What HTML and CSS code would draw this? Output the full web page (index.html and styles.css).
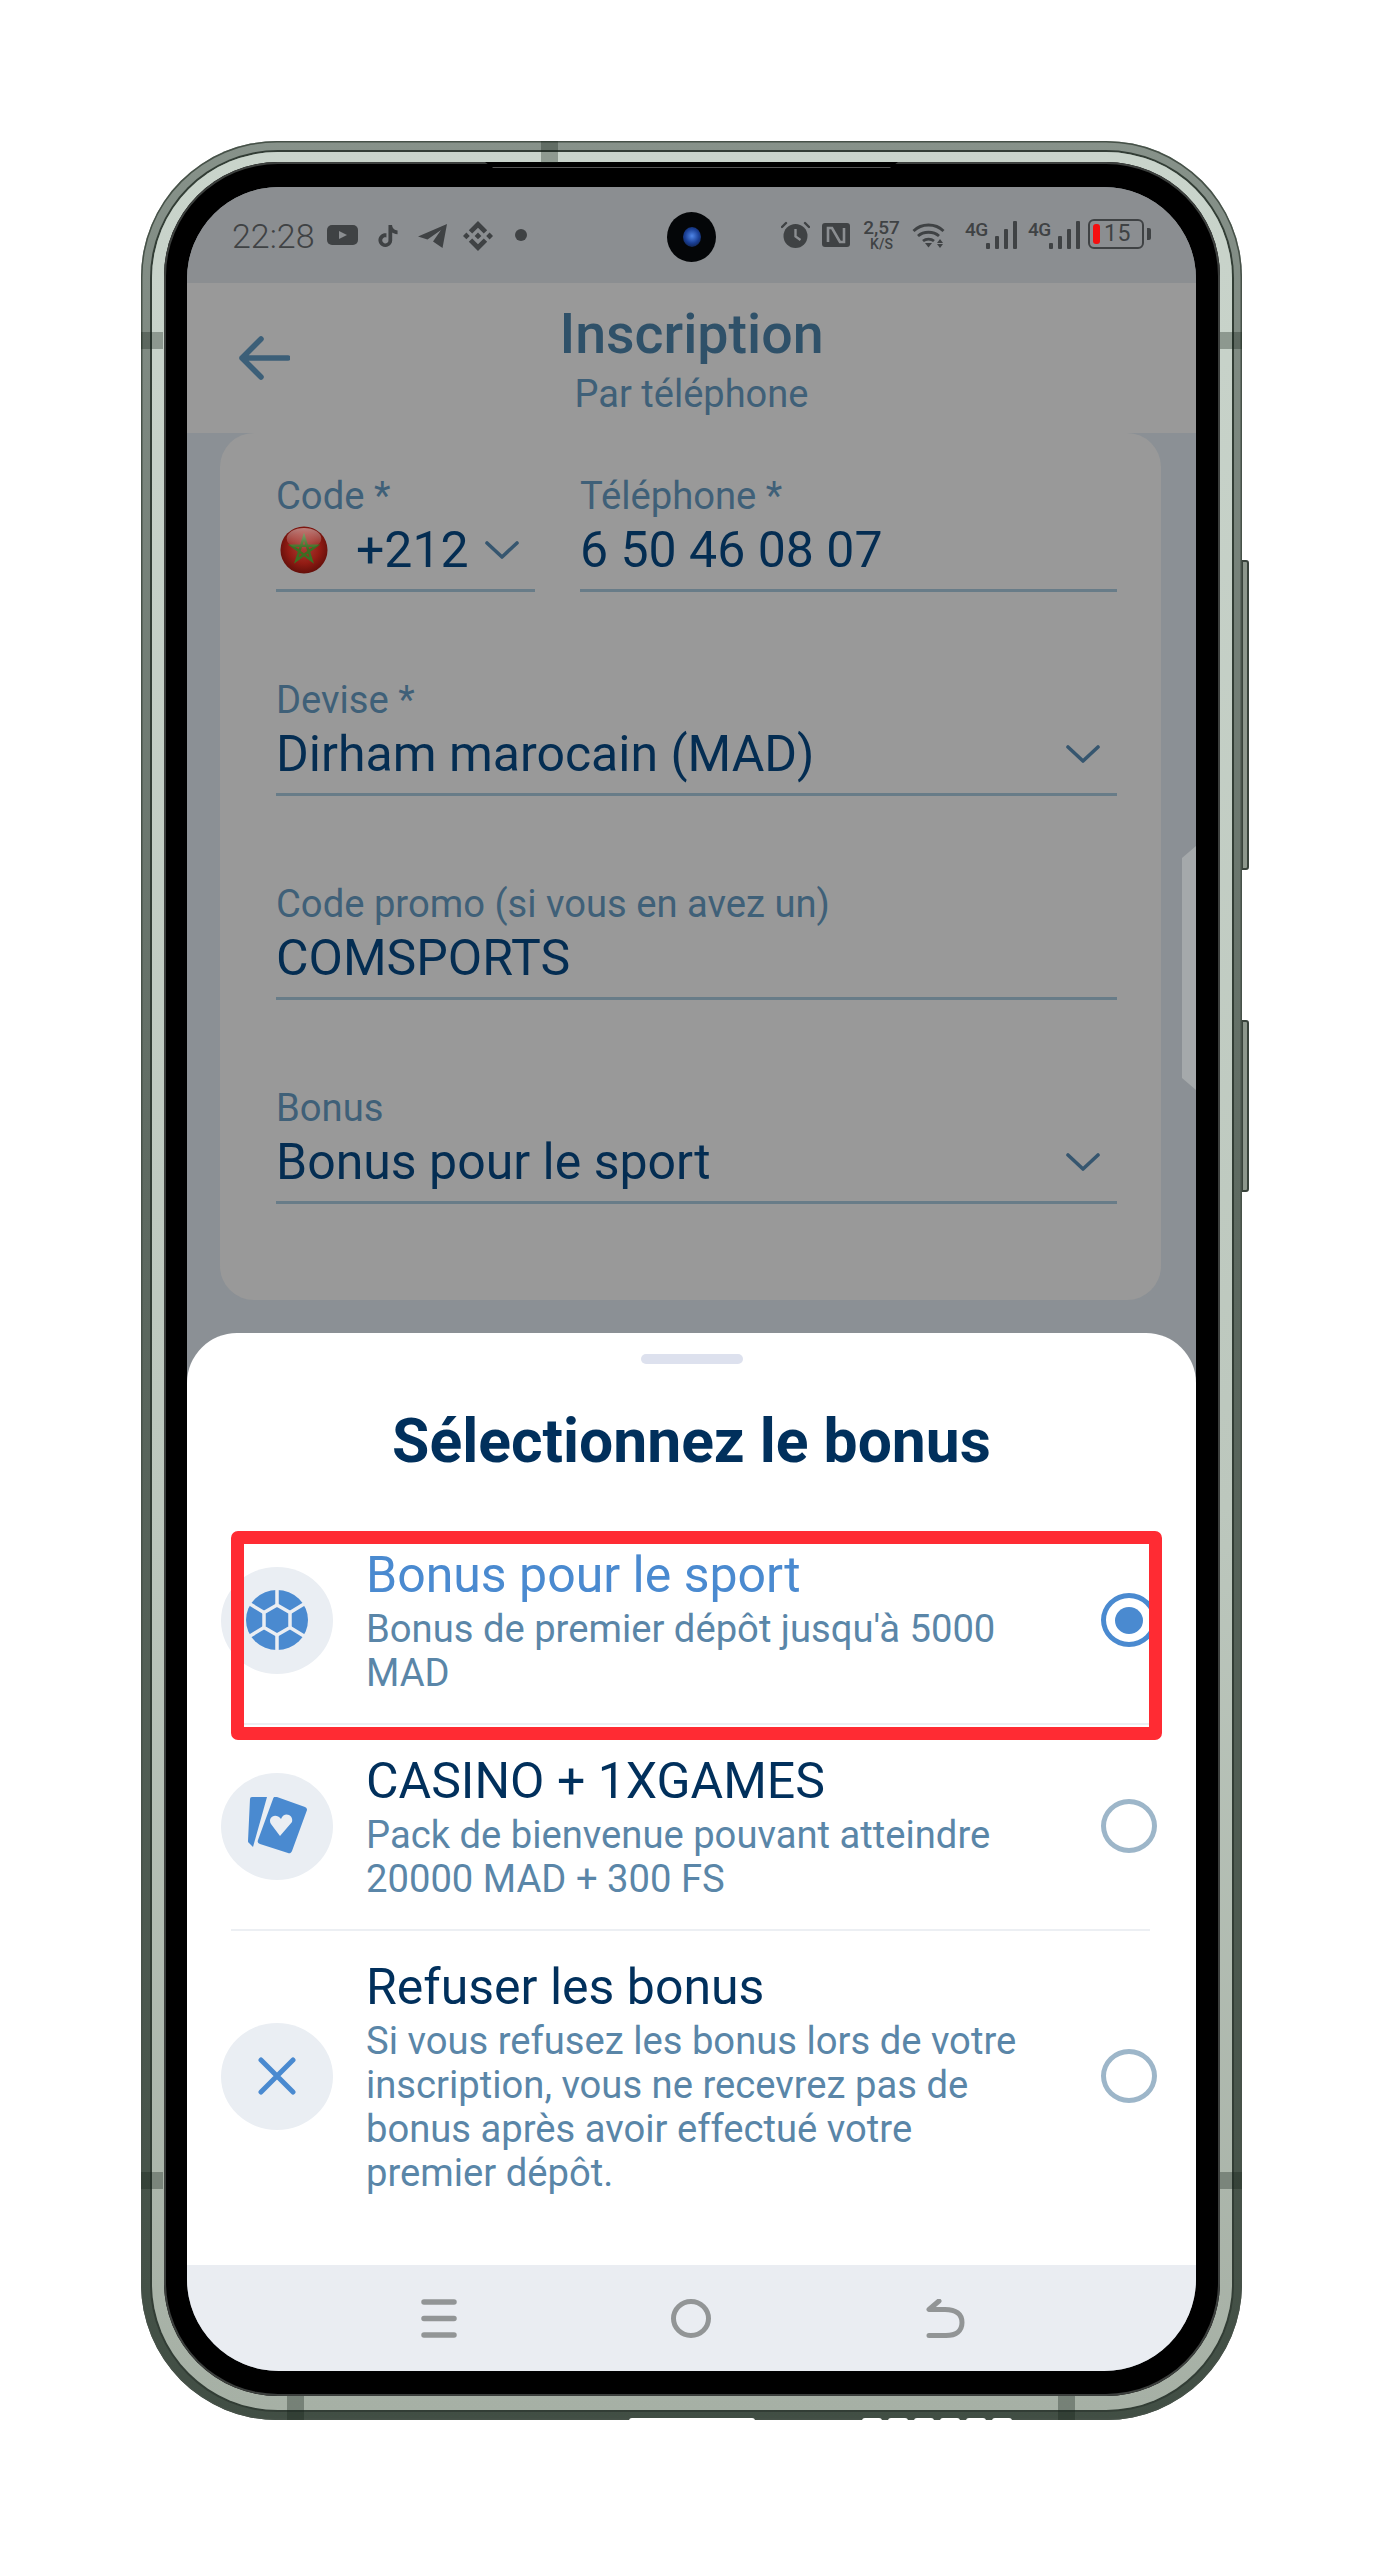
FILE: index.html
```html
<!DOCTYPE html>
<html lang="fr">
<head>
<meta charset="utf-8">
<title>Inscription</title>
<link rel="stylesheet" href="styles.css">
</head>
<body>
<div class="stage">
  <div class="phone">
    <span class="side-btn side-btn-a"></span>
    <span class="side-btn side-btn-b"></span>
    <span class="band band-top"></span>
    <span class="band band-l1"></span>
    <span class="band band-r1"></span>
    <span class="band band-l2"></span>
    <span class="band band-r2"></span>
    <span class="band band-b1"></span>
    <span class="band band-b2"></span>
    <span class="port"></span>
    <span class="speaker"><i></i><i></i><i></i><i></i><i></i><i></i></span>
    <div class="ring">
      <div class="bezel">
        <span class="earpiece"></span>
        <div class="screen">
          <div class="status">
            <div class="status-left">
              <span class="time">22:28</span>
              <svg class="ic ic-yt" viewBox="0 0 31 20"><rect width="31" height="20" rx="5" fill="#3f4244"/><path d="M12 6l8 4-8 4z" fill="#8b8e91"/></svg>
              <svg class="ic ic-tt" viewBox="0 0 24 24"><path fill="#3f4244" d="M12.525.02c1.31-.02 2.61-.01 3.91-.02.08 1.53.63 3.09 1.75 4.17 1.12 1.11 2.7 1.62 4.24 1.79v4.03c-1.44-.05-2.89-.35-4.2-.97-.57-.26-1.1-.59-1.62-.93-.01 2.92.01 5.84-.02 8.75-.08 1.4-.54 2.79-1.35 3.94-1.31 1.92-3.58 3.17-5.91 3.21-1.43.08-2.86-.31-4.08-1.03-2.02-1.19-3.44-3.37-3.65-5.71-.02-.5-.03-1-.01-1.49.18-1.9 1.12-3.72 2.58-4.96 1.66-1.44 3.98-2.13 6.15-1.72.02 1.48-.04 2.96-.04 4.44-.99-.32-2.15-.23-3.02.37-.63.41-1.11 1.04-1.36 1.75-.21.51-.15 1.07-.14 1.61.24 1.64 1.82 3.02 3.5 2.87 1.12-.01 2.19-.66 2.77-1.61.19-.33.4-.67.41-1.06.1-1.79.06-3.57.07-5.36.01-4.03-.01-8.05.02-12.07z"/></svg>
              <svg class="ic ic-tg" viewBox="0 0 29 24"><path fill="#3f4244" d="M0 12.5 29 0 24.5 24 15 17.5 23 6 9.5 15.5z"/></svg>
              <svg class="ic ic-bn" viewBox="0 0 24 24"><path fill="#3f4244" d="M16.624 13.9202l2.7175 2.7154-7.353 7.353-7.353-7.352 2.7175-2.7164 4.6355 4.6595 4.6356-4.6595zm4.6366-4.6366L24 12l-2.7154 2.7164L18.5682 12l2.6924-2.7164zm-9.272.001l2.7163 2.6914-2.7164 2.7174v-.001L9.2721 12l2.7164-2.7154zm-9.2722-.001L5.4088 12l-2.6914 2.6924L0 12l2.7164-2.7164zM11.9885.0115l7.353 7.329-2.7174 2.7154-4.6356-4.6356-4.6355 4.6595-2.7174-2.7154 7.353-7.353z"/></svg>
              <span class="dot"></span>
            </div>
            <div class="camera"><span class="lens"></span></div>
            <div class="status-right">
              <svg class="ic ic-alarm" viewBox="0 0 29 27"><circle cx="14.5" cy="15" r="12" fill="#3f4244"/><path d="M14.5 8v7.5l5 3.5" fill="none" stroke="#8b8e91" stroke-width="2.4"/><path d="M1 6l4-4M28 6l-4-4" stroke="#3f4244" stroke-width="2.4" stroke-linecap="round"/></svg>
              <svg class="ic ic-nfc" viewBox="0 0 28 24"><rect width="28" height="24" rx="3" fill="#3f4244"/><path d="M6 19V5h4l8 14h4V5" fill="none" stroke="#8b8e91" stroke-width="2.6"/></svg>
              <span class="speed"><b>2,57</b><b class="speed-unit">K/S</b></span>
              <svg class="ic ic-wifi" viewBox="0 0 33 26"><path d="M1.5 9C9.5 1 23.5 1 31.5 9M6 14c5.500-5 15.500-5 21 0M11 19c3-2.500 8-2.500 11 0" fill="none" stroke="#3f4244" stroke-width="2.800"/><path d="M13 21h7l-3.500 4.500z" fill="#3f4244"/><path d="M28 17l3 4h-6zM28 26l3-4h-6z" fill="#3f4244"/></svg>
              <span class="net"><span class="net-label">4G</span><span class="bars"><i class="b1"></i><i class="b2"></i><i class="b3"></i><i class="b4"></i></span></span>
              <span class="net"><span class="net-label">4G</span><span class="bars"><i class="b1"></i><i class="b2"></i><i class="b3"></i><i class="b4"></i></span></span>
              <span class="battery"><span class="battery-body"><i class="battery-fill"></i><span class="battery-num">15</span></span><i class="battery-tip"></i></span>
            </div>
          </div>
          <header class="topbar">
            <svg class="back" viewBox="0 0 52 44"><path d="M23 3 4 22l19 19M4 22h46" fill="none" stroke="#3c5f78" stroke-width="5.500" stroke-linecap="round" stroke-linejoin="round"/></svg>
            <h1 class="topbar-title">Inscription</h1>
            <p class="topbar-sub">Par téléphone</p>
          </header>
          <main class="content">
            <span class="edge-handle"></span>
            <section class="card">
              <div class="field-pair">
                <div class="field field-code">
                  <span class="label">Code *</span>
                  <div class="value-row">
                    <svg class="flag" viewBox="0 0 50 50">
                      <defs>
                        <radialGradient id="flagRed" cx="50%" cy="45%" r="55%"><stop offset="0" stop-color="#a83f36"/><stop offset=".6" stop-color="#931c14"/><stop offset="1" stop-color="#640f0a"/></radialGradient>
                        <linearGradient id="flagShine" x1="0" y1="0" x2="0" y2="1"><stop offset="0" stop-color="#fff" stop-opacity=".45"/><stop offset="1" stop-color="#fff" stop-opacity="0"/></linearGradient>
                      </defs>
                      <circle cx="25" cy="25" r="24.500" fill="url(#flagRed)"/>
                      <path d="M25 11 33 36 12 20.500H38L17 36z" fill="none" stroke="#3c6e22" stroke-width="2.600"/>
                      <ellipse cx="25" cy="13" rx="18" ry="11" fill="url(#flagShine)"/>
                    </svg>
                    <span class="value value-code">+212</span>
                    <svg class="chev chev-code" viewBox="0 0 34 18"><path d="M2 2l15 14L32 2" fill="none" stroke="#36566f" stroke-width="3.600" stroke-linecap="round" stroke-linejoin="round"/></svg>
                  </div>
                </div>
                <div class="field field-tel">
                  <span class="label">Téléphone *</span>
                  <div class="value-row"><span class="value">6 50 46 08 07</span></div>
                </div>
              </div>
              <div class="field">
                <span class="label">Devise *</span>
                <div class="value-row"><span class="value">Dirham marocain (MAD)</span><svg class="chev" viewBox="0 0 34 18"><path d="M2 2l15 14L32 2" fill="none" stroke="#36566f" stroke-width="3.600" stroke-linecap="round" stroke-linejoin="round"/></svg></div>
              </div>
              <div class="field">
                <span class="label">Code promo (si vous en avez un)</span>
                <div class="value-row"><span class="value">COMSPORTS</span></div>
              </div>
              <div class="field">
                <span class="label">Bonus</span>
                <div class="value-row"><span class="value">Bonus pour le sport</span><svg class="chev" viewBox="0 0 34 18"><path d="M2 2l15 14L32 2" fill="none" stroke="#36566f" stroke-width="3.600" stroke-linecap="round" stroke-linejoin="round"/></svg></div>
              </div>
            </section>
          </main>
          <section class="sheet">
            <span class="grabber"></span>
            <h2 class="sheet-title">Sélectionnez le bonus</h2>
            <ul class="options">
              <li class="option">
                <span class="opt-icon">
                  <svg class="opt-svg" viewBox="0 0 62 60">
                    <ellipse cx="31" cy="30" rx="31" ry="30" fill="#4a8ad0"/>
                    <path d="M31 15 44 22.500V37.500L31 45 18 37.500V22.500z" fill="none" stroke="#eaeef3" stroke-width="3.500"/>
                    <path d="M31 0V15M31 45V60M44 22.500 58 14M18 22.500 4 14M44 37.500 58 46M18 37.500 4 46" stroke="#eaeef3" stroke-width="3.500"/>
                  </svg>
                </span>
                <div class="opt-text">
                  <h3 class="opt-title opt-title-active">Bonus pour le sport</h3>
                  <p class="opt-desc">Bonus de premier dépôt jusqu'à 5000 MAD</p>
                </div>
                <span class="radio radio-on"><i></i></span>
              </li>
              <li class="option">
                <span class="opt-icon">
                  <svg class="opt-svg opt-svg-cards" viewBox="0 0 60 58">
                    <path d="M3 2a2 2 0 0 1 2-2H20L6 50 2 46a2 2 0 0 1-1-2z" fill="#4a8ad0"/>
                    <path d="M30 0 58 10a3 3 0 0 1 2 3L45 54a3 3 0 0 1-4 2L13 47a3 3 0 0 1-2-4L26 2a3 3 0 0 1 4-2z" fill="#4a8ad0"/>
                    <path d="M33 39 24 27c-4-7 5-12 10-5 3-8 13-4 11 3z" fill="#eaeef3"/>
                  </svg>
                </span>
                <div class="opt-text">
                  <h3 class="opt-title">CASINO + 1XGAMES</h3>
                  <p class="opt-desc">Pack de bienvenue pouvant atteindre 20000 MAD + 300 FS</p>
                </div>
                <span class="radio"></span>
              </li>
              <li class="option option-last">
                <span class="opt-icon">
                  <svg class="opt-svg opt-svg-x" viewBox="0 0 38 38"><path d="M3 3l32 32M35 3 3 35" stroke="#4a8ad0" stroke-width="5" stroke-linecap="round"/></svg>
                </span>
                <div class="opt-text">
                  <h3 class="opt-title">Refuser les bonus</h3>
                  <p class="opt-desc">Si vous refusez les bonus lors de votre inscription, vous ne recevrez pas de bonus après avoir effectué votre premier dépôt.</p>
                </div>
                <span class="radio"></span>
              </li>
            </ul>
            <span class="highlight"></span>
          </section>
          <nav class="navbar">
            <svg class="nav-ic" viewBox="0 0 36 39"><path d="M3 3H33M3 19.500H33M3 36H33" stroke="#929596" stroke-width="5.500" stroke-linecap="round"/></svg>
            <svg class="nav-ic nav-ic-home" viewBox="0 0 40 39"><ellipse cx="20" cy="19.500" rx="17.500" ry="17" fill="none" stroke="#929596" stroke-width="5"/></svg>
            <svg class="nav-ic nav-ic-back" viewBox="0 0 39 39"><path d="M13 2 3 10.500H19C30 10.500 36 15 36 23.500 36 32 30 36.500 20 36.500H3" fill="none" stroke="#929596" stroke-width="5" stroke-linecap="round" stroke-linejoin="round"/></svg>
          </nav>
        </div>
      </div>
    </div>
  </div>
</div>
</body>
</html>
```
FILE: styles.css
```css
* { box-sizing: border-box; }
html, body { margin: 0; padding: 0; background: #fff; }
body { font-family: Roboto, "Liberation Sans", sans-serif; }
h1, h2, h3, p, ul { margin: 0; padding: 0; font-weight: 400; }
ul { list-style: none; }

.stage { width: 1390px; height: 2560px; padding: 141px 0 0 141px; overflow: hidden; }

/* phone hardware */
.phone {
  position: relative;
  width: 1101px; height: 2279px;
  padding: 11px 10px 10px 11px;
  border-radius: 136px;
  background: linear-gradient(180deg, #87928a 0, #5f6b62 45%, #414e44 100%);
  box-shadow: inset 0 0 0 1.5px #465148;
}
.ring {
  height: 100%;
  padding: 10px 12px 14px 12px;
  border-radius: 126px;
  background: linear-gradient(180deg, #c9d4cb 0, #bcc7bd 60%, #a6b0a5 100%);
  box-shadow: 0 0 0 2px #323d35;
}
.bezel {
  position: relative;
  height: 100%;
  padding: 25px 24px 25px 23px;
  border-radius: 114px;
  background: #000;
  box-shadow: inset 0 0 0 2px #3c3f3d;
}
.earpiece {
  position: absolute; left: 321px; top: 0;
  width: 413px; height: 6px;
  background: #000;
  border-bottom: 1px solid #555;
  clip-path: polygon(0 0, 100% 0, 98% 100%, 2% 100%);
}
.side-btn {
  position: absolute; left: 1101px; width: 7px;
  background: #8d978c;
  border: 2px solid #39433b; border-left-width: 1px;
  border-radius: 0 3px 3px 0;
}
.side-btn-a { top: 419px; height: 310px; }
.side-btn-b { top: 879px; height: 172px; }
.band { position: absolute; background: rgba(20, 30, 22, .32); z-index: 1; }
.band-top { left: 400px; top: 0; width: 17px; height: 22px; }
.band-l1 { left: 0; top: 191px; width: 22px; height: 17px; }
.band-r1 { right: 0; top: 191px; width: 22px; height: 17px; }
.band-l2 { left: 0; top: 2031px; width: 22px; height: 17px; }
.band-r2 { right: 0; top: 2031px; width: 22px; height: 17px; }
.band-b1 { left: 146px; bottom: 0; width: 17px; height: 24px; }
.band-b2 { left: 917px; bottom: 0; width: 17px; height: 24px; }
.port { position: absolute; left: 488px; bottom: -1px; width: 126px; height: 3px; background: #fff; border-radius: 3px 3px 0 0; z-index: 2; }
.speaker { position: absolute; left: 721px; bottom: -1px; display: flex; gap: 6px; z-index: 2; }
.speaker i { width: 20px; height: 3px; background: #fff; border-radius: 3px 3px 0 0; }

.screen {
  display: flex; flex-direction: column;
  height: 100%;
  overflow: hidden;
  position: relative;
  border-radius: 92px;
  background: #8b9095;
}

/* status bar */
.status {
  position: relative;
  flex: 0 0 96px;
  display: flex; justify-content: space-between; align-items: flex-start;
  padding: 33px 45px 0 45px;
  background: #8b8e91;
  color: #3f4244;
}
.status-left, .status-right { display: flex; align-items: flex-start; }
.ic { display: block; flex: none; }
.time { font-size: 34px; line-height: 32px; width: 95px; font-weight: 300; }
.ic-yt { width: 31px; height: 20px; margin-top: 5px; }
.ic-tt { width: 22px; height: 24px; margin: 4px 0 0 19px; }
.ic-tg { width: 29px; height: 24px; margin: 4px 0 0 19px; }
.ic-bn { width: 30px; height: 30px; margin: 1px 0 0 16px; }
.dot { width: 12px; height: 12px; margin: 9px 0 0 22px; border-radius: 50%; background: #3f4244; }
.camera {
  position: absolute; left: 480px; top: 25px;
  width: 49px; height: 50px;
  display: flex; align-items: center; justify-content: center;
  border-radius: 50%; background: #040608;
}
.lens { width: 18px; height: 20px; border-radius: 50%; background: radial-gradient(circle at 50% 45%, #4f86e8 0, #1a3f95 50%, #0b1426 100%); }
.ic-alarm { width: 29px; height: 27px; margin-top: 1px; }
.ic-nfc { width: 28px; height: 24px; margin: 3px 0 0 12px; }
.speed { display: flex; flex-direction: column; align-items: center; width: 35px; margin: -2px 0 0 14px; }
.speed b { font-size: 19px; line-height: 19px; font-weight: 500; }
.speed b.speed-unit { font-size: 14px; line-height: 12px; margin-top: 1px; }
.ic-wifi { width: 33px; height: 26px; margin: 2px 0 0 13px; }
.net { display: flex; width: 52px; margin: 0 0 0 20px; height: 29px; position: relative; }
.net + .net { margin-left: 11px; }
.net-label { font-size: 19px; line-height: 20px; font-weight: 500; letter-spacing: -.5px; }
.bars { display: flex; align-items: flex-end; gap: 5px; position: absolute; right: 0; bottom: 0; height: 29px; }
.bars i { display: block; width: 4px; background: #3f4244; border-radius: 1px; }
.bars .b1 { height: 6px; }
.bars .b2 { height: 13px; }
.bars .b3 { height: 20px; }
.bars .b4 { height: 28px; }
.battery { display: flex; align-items: center; margin: -1px 0 0 8px; }
.battery-body { display: flex; align-items: center; width: 56px; height: 30px; padding: 0 3px; border: 2px solid #3f4244; border-radius: 6px; }
.battery-fill { width: 7px; height: 20px; background: #f40f10; border-radius: 3px; }
.battery-num { font-size: 23px; margin-left: 4px; line-height: 26px; letter-spacing: .6px; }
.battery-tip { width: 4px; height: 12px; margin-left: 3px; background: #3f4244; border-radius: 0 2px 2px 0; }

/* top bar */
.topbar {
  position: relative;
  flex: 0 0 150px;
  padding-top: 22px;
  text-align: center;
  background: #999;
}
.back { position: absolute; left: 51px; top: 53px; width: 52px; height: 44px; }
.topbar-title { font-size: 55.5px; line-height: 60px; font-weight: 500; color: #2f5169; }
.topbar-sub { font-size: 38px; line-height: 44px; margin-top: 7px; color: #3f6078; }

/* form */
.content { position: relative; flex: 0 0 900px; padding: 0 35px 0 33px; }
.edge-handle {
  position: absolute; right: 0; top: 413px;
  width: 14px; height: 244px;
  background: #a5a9ab;
  border-radius: 6px 0 0 6px;
  clip-path: polygon(0 12px, 100% 0, 100% 100%, 0 calc(100% - 12px));
}
.card {
  display: flex; flex-direction: column; gap: 86px;
  height: 867px;
  padding: 41px 44px 0 56px;
  border-radius: 34px;
  background: #999;
}
.field-pair { display: flex; gap: 45px; }
.field { display: block; height: 118px; border-bottom: 3px solid #687c88; }
.field-tel { flex: 1 1 auto; }
.field-code { flex: 0 0 259px; }
.label { display: block; font-size: 38.2px; line-height: 44px; color: #3f6078; }
.value-row { display: flex; align-items: center; justify-content: space-between; height: 60px; margin-top: 2px; padding-right: 17px; }
.value { font-size: 50px; line-height: 60px; color: #042d52; white-space: nowrap; }
.value-code { margin-right: auto; margin-left: 27px; }
.flag { width: 50px; height: 48px; flex: none; margin-left: 3px; }
.chev { width: 34px; height: 18px; flex: none; }
.chev-code { margin-right: -1px; }

/* bottom sheet */
.sheet {
  position: relative;
  flex: 0 0 932px;
  display: flex; flex-direction: column; align-items: center;
  padding-top: 21px;
  background: #fff;
  border-radius: 50px 50px 0 0;
}
.grabber { display: block; width: 102px; height: 10px; border-radius: 5px; background: #dde1ee; }
.sheet-title { margin-top: 44px; font-size: 60.6px; line-height: 68px; font-weight: 700; color: #01305c; white-space: nowrap; }
.options { align-self: stretch; margin: 43px 46px 0 44px; }
.option { display: flex; align-items: flex-start; padding: 26px 0 28px; border-bottom: 2px solid #eceff3; }
.option-last { border-bottom: 0; }
.opt-icon {
  flex: none; align-self: center;
  display: flex; align-items: center; justify-content: center;
  width: 112px; height: 107px;
  margin-left: -10px;
  border-radius: 50%;
  background: #eaeef3;
}
.opt-svg { display: block; width: 62px; height: 60px; }
.opt-svg-cards { width: 60px; height: 58px; }
.opt-svg-x { width: 38px; height: 38px; }
.opt-text { width: 660px; margin-left: 33px; }
.opt-title { font-size: 50px; line-height: 60px; margin-bottom: 2px; color: #01305c; }
.opt-title-active { color: #4a8ad0; }
.opt-desc { font-size: 38.2px; line-height: 44px; color: #5a86a8; }
.radio {
  flex: none; align-self: center;
  display: flex; align-items: center; justify-content: center;
  width: 56px; height: 54px;
  margin-left: auto; margin-right: -7px;
  border: 5px solid #9db6c9;
  border-radius: 50%;
}
.radio-on { border-color: #4a8ad0; }
.radio-on i { width: 28px; height: 27px; border-radius: 50%; background: #4a8ad0; }
.highlight {
  position: absolute; left: 44px; top: 198px;
  width: 931px; height: 209px;
  border: 13.500px solid #ff2b33;
  border-radius: 7px;
  pointer-events: none;
}

/* nav bar */
.navbar {
  flex: 0 0 106px;
  display: flex; align-items: flex-start;
  padding: 34px 0 0 234px;
  background: #eaedf2;
}
.nav-ic { display: block; width: 36px; height: 39px; flex: none; }
.nav-ic-home { width: 40px; margin-left: 214px; }
.nav-ic-back { width: 39px; margin-left: 215px; }
```
